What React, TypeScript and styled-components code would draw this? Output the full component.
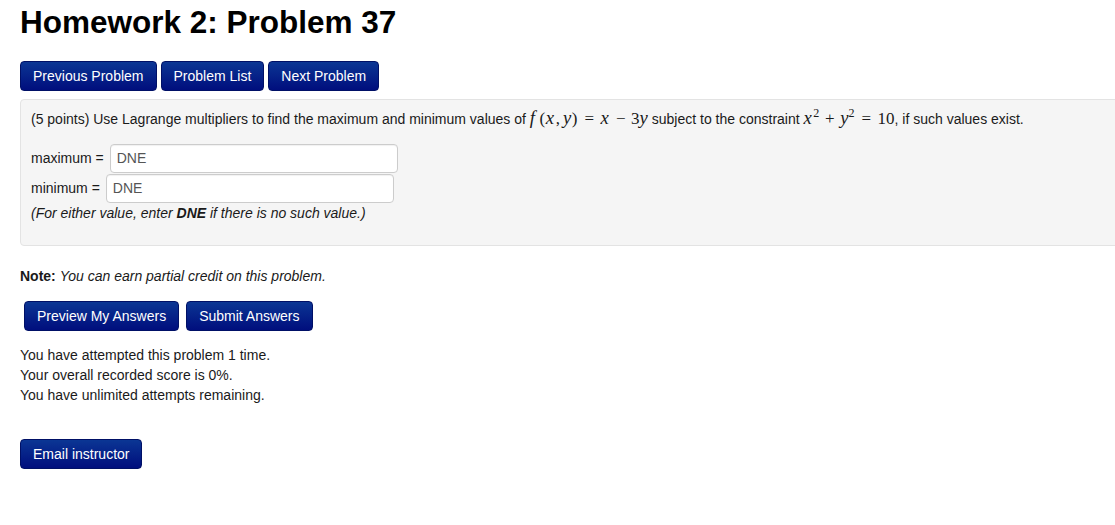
import React from "react";
import styled, { createGlobalStyle } from "styled-components";

const Global = createGlobalStyle`
  html, body { margin: 0; padding: 0; background: #fff; overflow-x: hidden; }
  body { font-family: "Liberation Sans", Arial, sans-serif; font-size: 14px; line-height: 20px; color: #1a1a1a; }
`;

const Page = styled.div`
  padding: 0 0 0 20px;
`;

const Title = styled.h1`
  margin: 5px 0 21px;
  font-family: "Liberation Sans", Arial, sans-serif;
  font-size: 31.5px;
  line-height: 35px;
  font-weight: bold;
  color: #000;
`;

const ButtonBar = styled.div<{ $indent?: number; $gap?: number }>`
  display: flex;
  gap: ${(p) => p.$gap ?? 4}px;
  padding-left: ${(p) => p.$indent ?? 0}px;
`;

const Button = styled.button`
  height: 30px;
  padding: 0 12px;
  font-family: "Liberation Sans", Arial, sans-serif;
  font-size: 14px;
  color: #fff;
  background: linear-gradient(to bottom, #0b3694, #000e7d);
  border: 1px solid #001066;
  border-radius: 4px;
  cursor: pointer;
  white-space: nowrap;
`;

const ProblemBox = styled.div`
  margin: 8px -12px 0 0;
  padding: 9px 10px 22px;
  background: #f5f5f5;
  border: 1px solid #e3e3e3;
  border-radius: 4px;
`;

const ProblemText = styled.div`
  height: 20px;
  margin: 0 0 14px;
  white-space: nowrap;
`;

const MathExpr = styled.span`
  font-family: "Liberation Serif", "Times New Roman", serif;
  font-size: 17px;
  line-height: 14px;
  white-space: nowrap;
`;

/* math italic identifier, with the advance width of the TeX glyph */
const Mi = styled.span<{ $w: number }>`
  display: inline-block;
  font-size: 1.1em;
  line-height: 14px;
  width: ${(p) => p.$w / 1.1}em;
  font-style: italic;
`;

/* upright glyph (digits, fences, punctuation) */
const Mn = styled.span<{ $w: number; $after?: number }>`
  display: inline-block;
  width: ${(p) => p.$w}em;
  margin-right: ${(p) => p.$after ?? 0}em;
  text-align: center;
`;

/* binary / relation operator with TeX spacing */
const Op = styled.span<{ $space: number }>`
  display: inline-block;
  width: 0.778em;
  margin: 0 ${(p) => p.$space}em;
  text-align: center;
`;

const Sup = styled.span`
  display: inline-block;
  position: relative;
  top: -0.55em;
  font-size: 71%;
  line-height: 1;
  width: 0.52em;
`;

const AnswerRow = styled.div`
  display: flex;
  align-items: center;
  gap: 6px;
  height: 30px;
`;

const AnswerInput = styled.input`
  box-sizing: border-box;
  width: 288px;
  height: 29px;
  padding: 0 6px;
  font-family: "Liberation Sans", Arial, sans-serif;
  font-size: 14px;
  color: #555;
  background: #fff;
  border: 1px solid #ccc;
  border-radius: 4px;
  box-shadow: inset 0 1px 1px rgba(0, 0, 0, 0.06);
`;

const Hint = styled.div`
  font-style: italic;
`;

const NoteLine = styled.div`
  margin-top: 20px;
`;

const Section = styled.div<{ $top: number }>`
  margin-top: ${(p) => p.$top}px;
`;

const StatusLine = styled.div``;

export default function App() {
  return (
    <>
      <Global />
      <Page>
        <Title>Homework 2: Problem 37</Title>
        <ButtonBar>
          <Button>Previous Problem</Button>
          <Button>Problem List</Button>
          <Button>Next Problem</Button>
        </ButtonBar>
        <ProblemBox>
          <ProblemText>
            (5 points) Use Lagrange multipliers to find the maximum and minimum values of{" "}
            <MathExpr>
              <Mi $w={0.55}>f</Mi>
              <Mn $w={0.389}>(</Mn>
              <Mi $w={0.572}>x</Mi>
              <Mn $w={0.278} $after={0.167}>,</Mn>
              <Mi $w={0.49}>y</Mi>
              <Mn $w={0.389}>)</Mn>
              <Op $space={0.278}>=</Op>
              <Mi $w={0.572}>x</Mi>
              <Op $space={0.222}>−</Op>
              <Mn $w={0.5}>3</Mn>
              <Mi $w={0.49}>y</Mi>
            </MathExpr>{" "}
            subject to the constraint{" "}
            <MathExpr>
              <Mi $w={0.572}>x</Mi>
              <Sup>2</Sup>
              <Op $space={0.222}>+</Op>
              <Mi $w={0.49}>y</Mi>
              <Sup>2</Sup>
              <Op $space={0.278}>=</Op>
              <Mn $w={1}>10</Mn>
            </MathExpr>
            , if such values exist.
          </ProblemText>
          <AnswerRow>
            <span>maximum =</span>
            <AnswerInput defaultValue="DNE" />
          </AnswerRow>
          <AnswerRow>
            <span>minimum =</span>
            <AnswerInput defaultValue="DNE" />
          </AnswerRow>
          <Hint>
            (For either value, enter <b>DNE</b> if there is no such value.)
          </Hint>
        </ProblemBox>
        <NoteLine>
          <b>Note:</b> <i>You can earn partial credit on this problem.</i>
        </NoteLine>
        <Section $top={15}>
          <ButtonBar $indent={4} $gap={7}>
            <Button>Preview My Answers</Button>
            <Button>Submit Answers</Button>
          </ButtonBar>
        </Section>
        <Section $top={14}>
          <StatusLine>You have attempted this problem 1 time.</StatusLine>
          <StatusLine>Your overall recorded score is 0%.</StatusLine>
          <StatusLine>You have unlimited attempts remaining.</StatusLine>
        </Section>
        <Section $top={34}>
          <Button>Email instructor</Button>
        </Section>
      </Page>
    </>
  );
}
